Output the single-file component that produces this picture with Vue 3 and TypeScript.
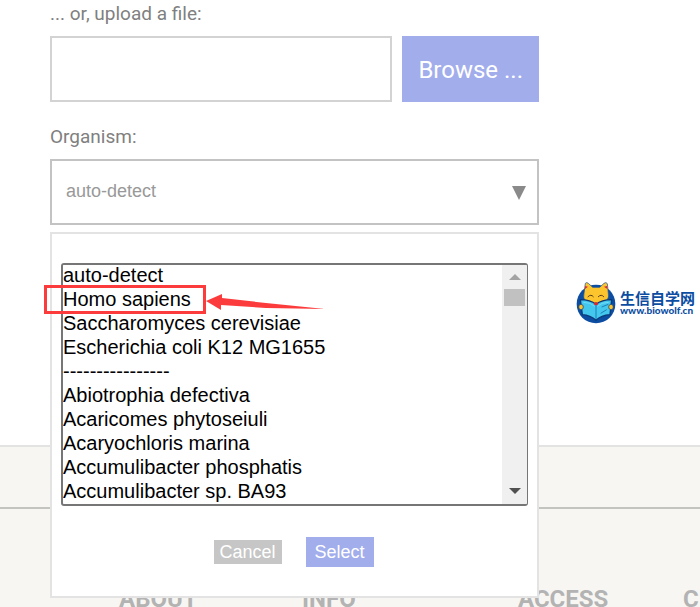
<script setup lang="ts">
import { ref } from 'vue'

const organisms: string[] = [
  'auto-detect',
  'Homo sapiens',
  'Saccharomyces cerevisiae',
  'Escherichia coli K12 MG1655',
  '----------------',
  'Abiotrophia defectiva',
  'Acaricomes phytoseiuli',
  'Acaryochloris marina',
  'Accumulibacter phosphatis',
  'Accumulibacter sp. BA93',
]
const sections: string[] = ['About', 'Info', 'Access', 'C']

const open = ref(true)
const organism = ref('auto-detect')
const picked = ref<string[]>([])
const fileName = ref('')
const picker = ref<HTMLInputElement | null>(null)

function choose(): void {
  if (picked.value.length) organism.value = picked.value[0]
  open.value = false
}
function onFile(e: Event): void {
  fileName.value = (e.target as HTMLInputElement).files?.[0]?.name ?? ''
}
</script>

<template>
  <div class="page">
    <main class="main">
      <form class="form" @submit.prevent>
        <label class="label" for="file-name">... or, upload a file:</label>
        <div class="upload">
          <input id="file-name" class="file-name" type="text" readonly :value="fileName" />
          <button class="browse" type="button" @click="picker?.click()">Browse ...</button>
          <input ref="picker" type="file" hidden @change="onFile" />
        </div>

        <label class="label organism-label" for="organism">Organism:</label>
        <div class="organism">
          <button id="organism" class="combo" type="button" aria-haspopup="listbox" :aria-expanded="open" @click="open = !open">
            <span>{{ organism }}</span>
            <svg class="caret" viewBox="0 0 14 14" aria-hidden="true"><path d="M0 0H14L7 14Z" /></svg>
          </button>

          <div v-if="open" class="popup">
            <div class="listbox">
              <select v-model="picked" class="options" multiple size="10" aria-label="Organism">
                <option v-for="name in organisms" :key="name" :value="name">{{ name }}</option>
              </select>
              <div class="scrollbar" aria-hidden="true">
                <svg class="arrow up" viewBox="0 0 12 6"><path d="M0 6L6 0L12 6Z" /></svg>
                <span class="thumb"></span>
                <svg class="arrow down" viewBox="0 0 12 6"><path d="M0 0H12L6 6Z" /></svg>
              </div>
            </div>
            <div class="actions">
              <button class="cancel" type="button" @click="open = false">Cancel</button>
              <button class="select" type="button" @click="choose">Select</button>
            </div>

            <div class="highlight"></div>
            <svg class="pointer" viewBox="0 0 120 18" aria-hidden="true">
              <path d="M0 8L16 1V5L60 10L119 16L60 15L15 12V17Z" />
            </svg>
          </div>
        </div>
      </form>
    </main>

    <footer class="footer">
      <div class="band"></div>
      <div class="sections">
        <h2 v-for="s in sections" :key="s">{{ s }}</h2>
      </div>
    </footer>

    <div class="brand">
      <svg class="wolf" viewBox="48 38 120 126" aria-hidden="true">
        <circle cx="108" cy="104" r="58" fill="#0c4da2" />
        <path d="M76 42Q80 37 85 42L98 54H119L132 42Q138 37 142 43L145 72Q148 83 141 93L121 107H95L74 93Q69 84 72 72Z" fill="#fcc42d" stroke="#0c4da2" stroke-width="2" />
        <path d="M75 50L84 52L75 59ZM141 50L132 52L142 59Z" fill="#e8232b" />
        <path d="M84 82Q93 73 100 82M115 82Q124 73 131 82" fill="none" stroke="#583d20" stroke-width="3" stroke-linecap="round" />
        <path d="M61 91Q91 91 108 105Q125 91 155 91L150 136Q124 138 108 153Q91 138 67 136Z" fill="#43c7ed" stroke="#0b3979" stroke-width="4" stroke-linejoin="round" />
        <path d="M70 99Q92 99 104 111M146 99Q124 99 112 111" fill="none" stroke="#8be6fa" stroke-width="2" />
        <path d="M108 106V151M125 113L145 105M122 132L140 121" fill="none" stroke="#0b579d" stroke-width="2" />
        <ellipse cx="108" cy="103" rx="6" ry="5" fill="#d9272e" />
        <ellipse cx="63" cy="113" rx="7" ry="8" fill="#fcc42d" stroke="#0b3979" stroke-width="2" />
        <ellipse cx="153" cy="113" rx="7" ry="8" fill="#fcc42d" stroke="#0b3979" stroke-width="2" />
      </svg>
      <div class="brand-text">
        <span class="brand-name">生信自学网</span>
        <span class="brand-url">www.biowolf.cn</span>
      </div>
    </div>
  </div>
</template>

<style>
body {
  margin: 0;
  background: #fff;
}
</style>

<style scoped>
.page {
  position: relative;
  display: flex;
  flex-direction: column;
  height: 100vh;
  overflow: hidden;
  font-family: Roboto, sans-serif;
  color: #808080;
}
.page * {
  box-sizing: border-box;
}
.main {
  flex: none;
  padding: 0 161px 220px 50px;
}
.form {
  display: flex;
  flex-direction: column;
}
.label {
  padding-bottom: 8px;
  font-size: 19px;
  line-height: 28px;
}
.organism-label {
  padding-top: 21px;
}
.upload {
  display: flex;
  gap: 10px;
}
.file-name {
  flex: 1;
  min-width: 0;
  height: 66px;
  padding: 0 14px;
  border: 2px solid #d3d3d3;
  background: #fff;
  font: 18px "Liberation Sans", Arial, sans-serif;
  outline: none;
}
button {
  border: 0;
  border-radius: 0;
  cursor: pointer;
}
.browse {
  padding: 2px 16px 0;
  background: #a2adec;
  color: #fff;
  font: 24px Roboto, sans-serif;
}
.organism {
  position: relative;
}
.combo {
  display: flex;
  align-items: center;
  justify-content: space-between;
  width: 100%;
  height: 66px;
  padding: 0 11px 2px 14px;
  border: 2px solid #c3c3c3;
  background: #fff;
  color: #999;
  font: 18px "Liberation Sans", Arial, sans-serif;
}
.caret {
  width: 14px;
  height: 14px;
  margin-top: 4px;
  fill: #8a8a8a;
}
.popup {
  position: absolute;
  z-index: 2;
  top: 73px;
  left: 0;
  right: 0;
  padding: 29px 9px;
  border: 2px solid #e3e3e3;
  background: #fff;
}
.listbox {
  display: flex;
  height: 243px;
  border: 2px solid #767676;
  border-right-width: 1px;
  border-radius: 3px;
  overflow: hidden;
}
.options {
  flex: 1;
  min-width: 0;
  height: 240px;
  margin-top: -1px;
  padding: 0;
  border: 0;
  outline: none;
  background: #fff;
  color: #000;
  font: 20px "Liberation Sans", Arial, sans-serif;
  overflow-y: auto;
  scrollbar-width: none;
}
.options option {
  height: 24px;
  min-height: 24px;
  padding: 0;
  line-height: 22px;
}
.scrollbar {
  display: flex;
  flex-direction: column;
  align-items: center;
  width: 25px;
  padding: 9px 0 10px;
  background: #f0f0f0;
}
.arrow {
  width: 12px;
  height: 6px;
}
.up {
  fill: #a3a3a3;
}
.down {
  margin-top: auto;
  fill: #505050;
}
.thumb {
  width: 21px;
  height: 17px;
  margin-top: 9px;
  background: #c1c1c1;
}
.actions {
  display: flex;
  align-items: center;
  justify-content: center;
  gap: 24px;
  padding: 31px 2px 0 0;
}
.cancel,
.select {
  width: 68px;
  padding: 0;
  color: #fff;
  font: 18px "Liberation Sans", Arial, sans-serif;
}
.cancel {
  height: 24px;
  background: #c6c6c6;
}
.select {
  height: 30px;
  background: #a2adec;
}
.highlight {
  position: absolute;
  top: 51px;
  left: -8px;
  width: 162px;
  height: 29px;
  border: 3px solid #fc3c3c;
}
.pointer {
  position: absolute;
  top: 59px;
  left: 154px;
  width: 120px;
  height: 18px;
  fill: #fc3c3c;
}
.footer {
  flex: 1;
  border-top: 2px solid #e3e3e3;
  background: #f7f6f2;
}
.band {
  height: 62px;
  border-bottom: 2px solid #c3c3bf;
}
.sections {
  display: grid;
  grid-template-columns: 183px 216px 165px auto;
  padding: 75px 0 0 119px;
}
.sections h2 {
  margin: 0;
  color: #b3b3b3;
  font-size: 24px;
  line-height: 30px;
  text-transform: uppercase;
}
.brand {
  position: absolute;
  top: 282px;
  right: 5px;
  display: flex;
  align-items: center;
  gap: 4px;
  color: #0c4da2;
}
.wolf {
  width: 40px;
  height: 42px;
}
.brand-text {
  display: flex;
  flex-direction: column;
  font-weight: 700;
  white-space: nowrap;
}
.brand-name {
  font-family: "Noto Sans CJK SC", sans-serif;
  font-size: 15px;
  line-height: 15px;
}
.brand-url {
  font-family: Lato, sans-serif;
  font-size: 10px;
  font-weight: 900;
  line-height: 11px;
}
</style>
